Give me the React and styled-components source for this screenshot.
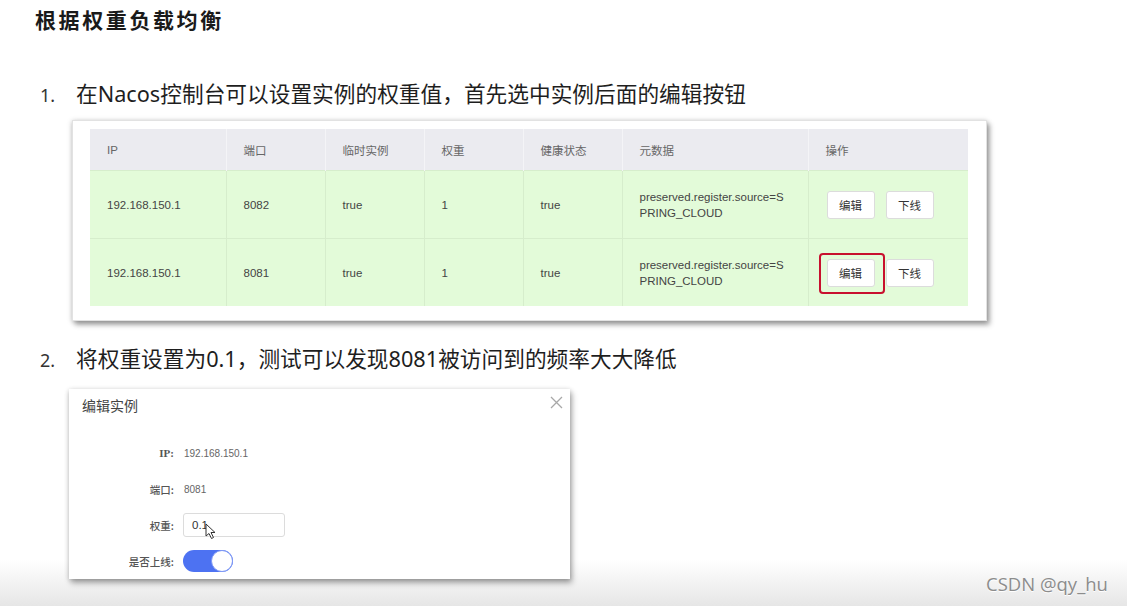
import React from 'react'
import styled, { createGlobalStyle } from 'styled-components'

const Global = createGlobalStyle`
    html, body {
        margin: 0;
        padding: 0;
    }
    body {
        min-height: 606px;
        background: linear-gradient(to bottom, #ffffff 0, #ffffff 560px, #e6e6e6 606px);
        font-family: "Noto Sans", "Noto Sans CJK SC", sans-serif;
        color: #222;
    }
`

const rows = [
    { id: 1, ip: '192.168.150.1', port: '8082', highlight: false },
    { id: 2, ip: '192.168.150.1', port: '8081', highlight: true },
]

const columns = ['IP', '端口', '临时实例', '权重', '健康状态', '元数据', '操作']
const widths = [136, 99, 99, 99, 99, 186, 160]

export default () => (
    <Page>
        <Global />
        <Title>根据权重负载均衡</Title>
        <Step>
            <Num>1.</Num>
            <StepText>在Nacos控制台可以设置实例的权重值，首先选中实例后面的编辑按钮</StepText>
        </Step>
        <Card>
            <Table>
                <colgroup>
                    {widths.map((w, i) => <col key={i} style={{ width: w }} />)}
                </colgroup>
                <thead>
                    <tr>
                        {columns.map(c => <Th key={c}>{c}</Th>)}
                    </tr>
                </thead>
                <tbody>
                    {rows.map(({ id, ip, port, highlight }) => (
                        <Tr key={id}>
                            <Td>{ip}</Td>
                            <Td>{port}</Td>
                            <Td>true</Td>
                            <Td>1</Td>
                            <Td>true</Td>
                            <Td>preserved.register.source=S<br />PRING_CLOUD</Td>
                            <Td>
                                <Actions>
                                    <Button highlight={highlight}>编辑</Button>
                                    <Button>下线</Button>
                                </Actions>
                            </Td>
                        </Tr>
                    ))}
                </tbody>
            </Table>
        </Card>
        <Step second>
            <Num>2.</Num>
            <StepText>将权重设置为0.1，测试可以发现8081被访问到的频率大大降低</StepText>
        </Step>
        <Dialog>
            <DialogHead>
                <DialogTitle>编辑实例</DialogTitle>
                <Close>
                    <svg width='13' height='13' viewBox='0 0 13 13'>
                        <path d='M1 1 L12 12 M12 1 L1 12' stroke='#a8a8a8' strokeWidth='1.3' />
                    </svg>
                </Close>
            </DialogHead>
            <Form>
                <Label bold>IP:</Label>
                <Value>192.168.150.1</Value>
                <Label>端口:</Label>
                <Value>8081</Value>
                <Label>权重:</Label>
                <InputWrap>
                    <Input>0.1</Input>
                    <Cursor>
                        <svg width='11' height='17' viewBox='0 0 11 17'>
                            <path d='M1 1 L1 13 L4 10.5 L6.5 15.5 L8.5 14.5 L6 9.5 L10 9.5 Z' fill='#fff' stroke='#333' strokeWidth='1' strokeLinejoin='round' />
                        </svg>
                    </Cursor>
                </InputWrap>
                <Label>是否上线:</Label>
                <Switch><Knob /></Switch>
            </Form>
        </Dialog>
        <Mark>CSDN @qy_hu</Mark>
    </Page>
)

const Page = styled.div`
    position: relative;
    width: 1127px;
    height: 606px;
    padding: 5px 0 0 0;
    box-sizing: border-box;
`

const Title = styled.h1`
    margin: 0 0 0 35px;
    font-size: 21px;
    line-height: 30px;
    letter-spacing: 2.6px;
    font-weight: 700;
    color: #1a1a1a;
`

const Step = styled.div`
    display: flex;
    align-items: baseline;
    height: 32px;
    line-height: 32px;
    margin-top: ${props => props.second ? '22px' : '43px'};
    padding-left: 40px;
`

const Num = styled.span`
    width: 36px;
    font-size: 18px;
    color: #333;
`

const StepText = styled.span`
    font-size: 21.7px;
    color: #1e1e1e;
    white-space: nowrap;
`

const Card = styled.div`
    margin: 10px 0 0 72px;
    width: 915px;
    height: 201px;
    box-sizing: border-box;
    padding: 8px 20px 0 17px;
    background: #fff;
    border: 1px solid #e2e2e2;
    box-shadow: 0 1px 5px rgba(0, 0, 0, 0.25), 3px 4px 5px rgba(0, 0, 0, 0.3);
`

const Table = styled.table`
    width: 878px;
    border-collapse: collapse;
    table-layout: fixed;
    font-family: "Liberation Sans", "Noto Sans CJK SC", sans-serif;
    font-size: 11.5px;
`

const Th = styled.th`
    height: 41px;
    padding: 0 0 0 17px;
    text-align: left;
    font-weight: 400;
    font-size: 11.5px;
    color: #666;
    background: #ebebf0;
    border-right: 1px solid #f4f4f7;
    &:last-child {
        border-right: 0;
    }
`

const Tr = styled.tr`
    background: #e3fbd9;
    border-top: 1px solid #d6edcc;
`

const Td = styled.td`
    height: 67px;
    padding: 0 0 0 17px;
    line-height: 16px;
    color: #444;
    border-right: 1px solid #d6edcc;
    vertical-align: middle;
    &:last-child {
        border-right: 0;
    }
`

const Actions = styled.div`
    display: flex;
    gap: 11px;
    padding-left: 1px;
`

const Button = styled.div`
    position: relative;
    display: flex;
    align-items: center;
    justify-content: center;
    width: 48px;
    height: 28px;
    box-sizing: border-box;
    background: #fff;
    border: 1px solid #dcdcdc;
    border-radius: 3px;
    font-family: "Noto Sans CJK SC", sans-serif;
    font-size: 11.5px;
    color: #333;
    &::after {
        content: '';
        display: ${props => props.highlight ? 'block' : 'none'};
        position: absolute;
        top: -7px;
        left: -9px;
        right: -11px;
        bottom: -8px;
        border: 2px solid #c8102e;
        border-radius: 4px;
    }
`

const Dialog = styled.div`
    margin: 14px 0 0 69px;
    width: 501px;
    height: 190px;
    overflow: hidden;
    background: #fff;
    box-shadow: 0 1px 5px rgba(0, 0, 0, 0.2), 2px 4px 6px rgba(0, 0, 0, 0.3);
    font-family: "Noto Sans CJK SC", sans-serif;
`

const DialogHead = styled.div`
    display: flex;
    justify-content: space-between;
    align-items: center;
    height: 32px;
    padding: 0 7px 0 13px;
`

const DialogTitle = styled.span`
    font-size: 14px;
    color: #444;
`

const Close = styled.span`
    display: flex;
    margin-top: -6px;
`

const Form = styled.div`
    display: grid;
    grid-template-columns: 105px 1fr;
    grid-auto-rows: 36px;
    column-gap: 10px;
    align-items: center;
    padding-top: 14px;
`

const Label = styled.span`
    text-align: right;
    font-size: ${props => props.bold ? '11px' : '10.5px'};
    font-weight: ${props => props.bold ? 700 : 500};
    font-family: ${props => props.bold ? '"Liberation Serif", serif' : '"Noto Sans CJK SC", sans-serif'};
    color: #555;
`

const Value = styled.span`
    font-family: "Liberation Sans", sans-serif;
    font-size: 10px;
    color: #666;
`

const InputWrap = styled.div`
    position: relative;
    margin-left: -1px;
`

const Input = styled.div`
    display: flex;
    align-items: center;
    width: 102px;
    height: 24px;
    box-sizing: border-box;
    padding-left: 8px;
    border: 1px solid #dcdcdc;
    border-radius: 3px;
    font-family: "Liberation Sans", sans-serif;
    font-size: 11.5px;
    color: #333;
`

const Cursor = styled.span`
    position: absolute;
    left: 22px;
    top: 10px;
    display: flex;
`

const Switch = styled.div`
    display: flex;
    justify-content: flex-end;
    margin-left: -1px;
    width: 50px;
    height: 22px;
    border-radius: 11px;
    background: #4d72f2;
`

const Knob = styled.div`
    width: 22px;
    height: 22px;
    box-sizing: border-box;
    border-radius: 50%;
    background: #fff;
    border: 1px solid #7e98f5;
`

const Mark = styled.div`
    position: absolute;
    left: 986px;
    top: 573px;
    line-height: 22px;
    font-family: "Open Sans", sans-serif;
    font-size: 18.5px;
    color: #8c8c8c;
    text-shadow: 0 1px 0 #fff;
`
